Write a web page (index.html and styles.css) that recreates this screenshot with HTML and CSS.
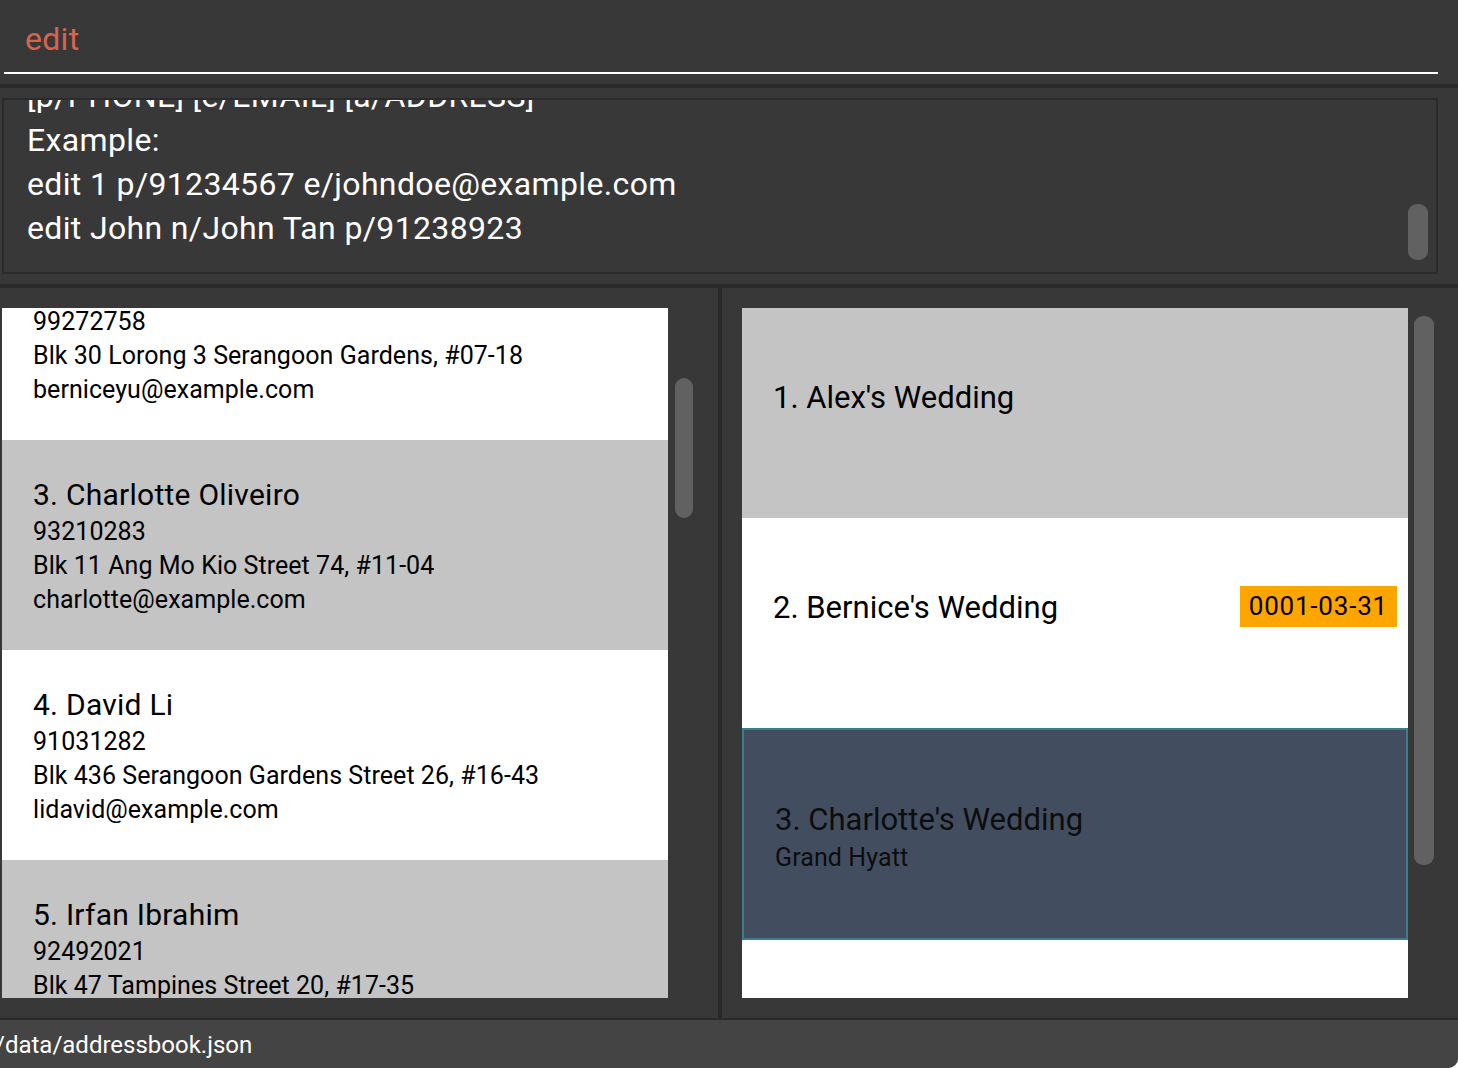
FILE: index.html
```html
<!DOCTYPE html>
<html lang="en">
<head>
<meta charset="utf-8">
<title>Address Book</title>
<link rel="stylesheet" href="styles.css">
</head>
<body>
<div class="app">
  <header class="command">
    <div class="command-input">edit</div>
  </header>

  <section class="result">
    <div class="result-box">
      <div class="result-text">
        <div class="result-line">[p/PHONE] [e/EMAIL] [a/ADDRESS]</div>
        <div class="result-line">Example:</div>
        <div class="result-line">edit 1 p/91234567 e/johndoe@example.com</div>
        <div class="result-line">edit John n/John Tan p/91238923</div>
      </div>
      <div class="result-track"><div class="thumb result-thumb"></div></div>
    </div>
  </section>

  <main class="split">
    <div class="pane pane-left">
      <div class="viewport">
        <div class="person-list">
          <div class="person card-white">
            <div class="person-name">2. Bernice Yu</div>
            <div class="person-field">99272758</div>
            <div class="person-field">Blk 30 Lorong 3 Serangoon Gardens, #07-18</div>
            <div class="person-field">berniceyu@example.com</div>
          </div>
          <div class="person card-grey">
            <div class="person-name">3. Charlotte Oliveiro</div>
            <div class="person-field">93210283</div>
            <div class="person-field">Blk 11 Ang Mo Kio Street 74, #11-04</div>
            <div class="person-field">charlotte@example.com</div>
          </div>
          <div class="person card-white">
            <div class="person-name">4. David Li</div>
            <div class="person-field">91031282</div>
            <div class="person-field">Blk 436 Serangoon Gardens Street 26, #16-43</div>
            <div class="person-field">lidavid@example.com</div>
          </div>
          <div class="person card-grey">
            <div class="person-name">5. Irfan Ibrahim</div>
            <div class="person-field">92492021</div>
            <div class="person-field">Blk 47 Tampines Street 20, #17-35</div>
          </div>
        </div>
      </div>
      <div class="track track-left"><div class="thumb left-thumb"></div></div>
    </div>

    <div class="divider"></div>

    <div class="pane pane-right">
      <div class="viewport">
        <div class="wedding-list">
          <div class="wedding card-grey">
            <div class="wedding-head">
              <div class="wedding-title">1. Alex's Wedding</div>
            </div>
            <div class="wedding-venue"></div>
          </div>
          <div class="wedding card-white">
            <div class="wedding-head">
              <div class="wedding-title">2. Bernice's Wedding</div>
              <div class="badge">0001-03-31</div>
            </div>
            <div class="wedding-venue"></div>
          </div>
          <div class="wedding card-selected">
            <div class="wedding-head">
              <div class="wedding-title">3. Charlotte's Wedding</div>
            </div>
            <div class="wedding-venue">Grand Hyatt</div>
          </div>
          <div class="wedding card-white"></div>
        </div>
      </div>
      <div class="track track-right"><div class="thumb right-thumb"></div></div>
    </div>
  </main>

  <footer class="status">
    <span class="status-text">/data/addressbook.json</span>
  </footer>
</div>
</body>
</html>
```

FILE: styles.css
```css
* {
  box-sizing: border-box;
}

html {
  background: #ffffff;
}

body {
  margin: 0;
  font-family: Roboto, "Liberation Sans", sans-serif;
}

.app {
  width: 1458px;
  height: 1068px;
  background: #383838;
  display: flex;
  flex-direction: column;
  overflow: hidden;
  border-bottom-right-radius: 10px;
}

/* command box */
.command {
  height: 84px;
  padding: 0 20px 10px 4px;
  flex: none;
}

.command-input {
  height: 74px;
  border-bottom: 2px solid #ffffff;
  padding: 17px 0 0 21px;
  font-size: 32px;
  line-height: 44px;
  color: #d6654f;
  letter-spacing: 0.3px;
}

/* result display */
.result {
  flex: none;
  border-top: 4px solid #2a2a2a;
  padding: 10px 20px 10px 2px;
}

.result-box {
  height: 176px;
  border: 2px solid #2b2b2b;
  display: flex;
  overflow: hidden;
}

.result-text {
  flex: 1;
  padding-left: 23px;
  margin-top: -26px;
  color: #ffffff;
  font-size: 32px;
  line-height: 44px;
  letter-spacing: 0.35px;
  white-space: nowrap;
}

.result-track {
  width: 20px;
  margin-right: 8px;
  flex: none;
}

.thumb {
  background: #616161;
  border-radius: 9px;
}

.result-thumb {
  margin-top: 104px;
  height: 56px;
}

/* split area */
.split {
  flex: none;
  height: 736px;
  border-top: 4px solid #2a2a2a;
  border-bottom: 2px solid #2a2a2a;
  display: flex;
}

.pane {
  display: flex;
  padding-top: 20px;
  padding-bottom: 20px;
}

.pane-left {
  width: 718px;
  padding-left: 2px;
}

.pane-right {
  flex: 1;
  padding-left: 20px;
}

.divider {
  width: 4px;
  background: #2a2a2a;
  flex: none;
}

.viewport {
  width: 666px;
  height: 690px;
  overflow: hidden;
  flex: none;
}

.track {
  flex: 1;
}

.left-thumb {
  margin-left: 7px;
  width: 18px;
  margin-top: 70px;
  height: 140px;
}

.right-thumb {
  margin-left: 6px;
  width: 20px;
  margin-top: 8px;
  height: 549px;
}

.card-white {
  background: #ffffff;
}

.card-grey {
  background: #c4c4c4;
}

/* person cards */
.person-list {
  margin-top: -78px;
}

.person {
  height: 210px;
  padding: 35px 31px 0 31px;
  color: #000000;
  white-space: nowrap;
}

.person-name {
  font-size: 30px;
  line-height: 40px;
  letter-spacing: 0.25px;
}

.person-field {
  font-size: 25px;
  line-height: 34px;
  letter-spacing: 0.05px;
}

/* wedding cards */
.wedding {
  height: 210px;
  padding: 70px 11px 0 31px;
  color: #000000;
  white-space: nowrap;
}

.card-selected {
  height: 212px;
  background: #424e5f;
  border: 2px solid #3c7d8e;
  padding: 70px 9px 0 31px;
  color: #0d0d0d;
}

.wedding-head {
  display: flex;
  align-items: center;
  justify-content: space-between;
  height: 40px;
}

.wedding-title {
  font-size: 31px;
  line-height: 40px;
  letter-spacing: 0;
}

.wedding-venue {
  font-size: 25px;
  line-height: 36px;
  min-height: 36px;
  letter-spacing: 0.1px;
}

.badge {
  background: #ffa500;
  height: 41px;
  line-height: 41px;
  margin-top: -3px;
  padding: 0 9px;
  font-size: 26px;
  letter-spacing: 0.8px;
}

/* status bar */
.status {
  flex: 1;
  background: #444444;
  padding-top: 8px;
  overflow: hidden;
}

.status-text {
  display: block;
  margin-left: -5px;
  color: #ffffff;
  font-size: 24px;
  line-height: 34px;
  letter-spacing: 0;
}
```
